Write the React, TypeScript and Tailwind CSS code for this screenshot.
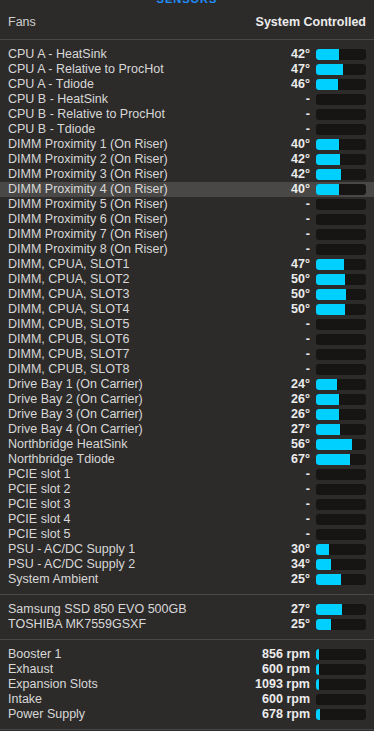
import React from 'react';

type Sensor = { name: string; value: string; fill: number };

const temps: Sensor[] = [
    { name: 'CPU A - HeatSink', value: '42°', fill: 23 },
    { name: 'CPU A - Relative to ProcHot', value: '47°', fill: 27 },
    { name: 'CPU A - Tdiode', value: '46°', fill: 22 },
    { name: 'CPU B - HeatSink', value: '-', fill: 0 },
    { name: 'CPU B - Relative to ProcHot', value: '-', fill: 0 },
    { name: 'CPU B - Tdiode', value: '-', fill: 0 },
    { name: 'DIMM Proximity 1 (On Riser)', value: '40°', fill: 23 },
    { name: 'DIMM Proximity 2 (On Riser)', value: '42°', fill: 24 },
    { name: 'DIMM Proximity 3 (On Riser)', value: '42°', fill: 25 },
    { name: 'DIMM Proximity 4 (On Riser)', value: '40°', fill: 23 },
    { name: 'DIMM Proximity 5 (On Riser)', value: '-', fill: 0 },
    { name: 'DIMM Proximity 6 (On Riser)', value: '-', fill: 0 },
    { name: 'DIMM Proximity 7 (On Riser)', value: '-', fill: 0 },
    { name: 'DIMM Proximity 8 (On Riser)', value: '-', fill: 0 },
    { name: 'DIMM, CPUA, SLOT1', value: '47°', fill: 28 },
    { name: 'DIMM, CPUA, SLOT2', value: '50°', fill: 29 },
    { name: 'DIMM, CPUA, SLOT3', value: '50°', fill: 30 },
    { name: 'DIMM, CPUA, SLOT4', value: '50°', fill: 29 },
    { name: 'DIMM, CPUB, SLOT5', value: '-', fill: 0 },
    { name: 'DIMM, CPUB, SLOT6', value: '-', fill: 0 },
    { name: 'DIMM, CPUB, SLOT7', value: '-', fill: 0 },
    { name: 'DIMM, CPUB, SLOT8', value: '-', fill: 0 },
    { name: 'Drive Bay 1 (On Carrier)', value: '24°', fill: 21 },
    { name: 'Drive Bay 2 (On Carrier)', value: '26°', fill: 23 },
    { name: 'Drive Bay 3 (On Carrier)', value: '26°', fill: 23 },
    { name: 'Drive Bay 4 (On Carrier)', value: '27°', fill: 24 },
    { name: 'Northbridge HeatSink', value: '56°', fill: 36 },
    { name: 'Northbridge Tdiode', value: '67°', fill: 34 },
    { name: 'PCIE slot 1', value: '-', fill: 0 },
    { name: 'PCIE slot 2', value: '-', fill: 0 },
    { name: 'PCIE slot 3', value: '-', fill: 0 },
    { name: 'PCIE slot 4', value: '-', fill: 0 },
    { name: 'PCIE slot 5', value: '-', fill: 0 },
    { name: 'PSU - AC/DC Supply 1', value: '30°', fill: 13 },
    { name: 'PSU - AC/DC Supply 2', value: '34°', fill: 15 },
    { name: 'System Ambient', value: '25°', fill: 25 },
];

const disks: Sensor[] = [
    { name: 'Samsung SSD 850 EVO 500GB', value: '27°', fill: 26 },
    { name: 'TOSHIBA MK7559GSXF', value: '25°', fill: 15 },
];

const fans: Sensor[] = [
    { name: 'Booster 1', value: '856 rpm', fill: 3 },
    { name: 'Exhaust', value: '600 rpm', fill: 3 },
    { name: 'Expansion Slots', value: '1093 rpm', fill: 3 },
    { name: 'Intake', value: '600 rpm', fill: 0 },
    { name: 'Power Supply', value: '678 rpm', fill: 4 },
];

const Row: React.FC<{ sensor: Sensor; active?: boolean }> = ({ sensor, active }) => (
    <div className={`flex items-center h-[15px] pl-2 pr-2 ${active ? 'bg-[#4a4847]' : ''}`}>
        <span className="flex-1 text-[12.5px] text-[#d8d8d8] whitespace-nowrap">{sensor.name}</span>
        <span className="text-[12.5px] font-bold text-[#ececec] text-right whitespace-nowrap">{sensor.value}</span>
        <div className="ml-[6px] w-[50px] h-[11px] rounded-[3px] bg-[#161514] overflow-hidden">
            <div className="h-full bg-[#00d0ff]" style={{ width: sensor.fill }} />
        </div>
    </div>
);

const App: React.FC = () => {
    return (
        <div className="w-[374px] h-[731px] bg-[#2d2b2a] overflow-hidden" style={{ fontFamily: '"Liberation Sans", Arial, sans-serif' }}>
            <div className="h-[6px] overflow-hidden flex justify-center">
                <span className="-mt-[6px] text-[11px] leading-[11px] font-bold tracking-[1px] text-[#1d8fff]">SENSORS</span>
            </div>
            <div className="h-[33px] flex items-center justify-between px-2">
                <span className="text-[12.5px] text-[#cfcfcf]">Fans</span>
                <span className="text-[12.5px] font-bold text-[#ececec]">System Controlled</span>
            </div>
            <div className="h-px bg-[#4a4847]" />

            <div className="py-[7px]">
                {temps.map((s) => (
                    <Row key={s.name} sensor={s} active={s.name === 'DIMM Proximity 4 (On Riser)'} />
                ))}
            </div>
            <div className="h-px bg-[#4a4847]" />

            <div className="py-[7px]">
                {disks.map((s) => (
                    <Row key={s.name} sensor={s} />
                ))}
            </div>
            <div className="h-px bg-[#4a4847]" />

            <div className="py-[7px]">
                {fans.map((s) => (
                    <Row key={s.name} sensor={s} />
                ))}
            </div>
            <div className="h-px bg-[#4a4847]" />
        </div>
    );
};

export default App;
